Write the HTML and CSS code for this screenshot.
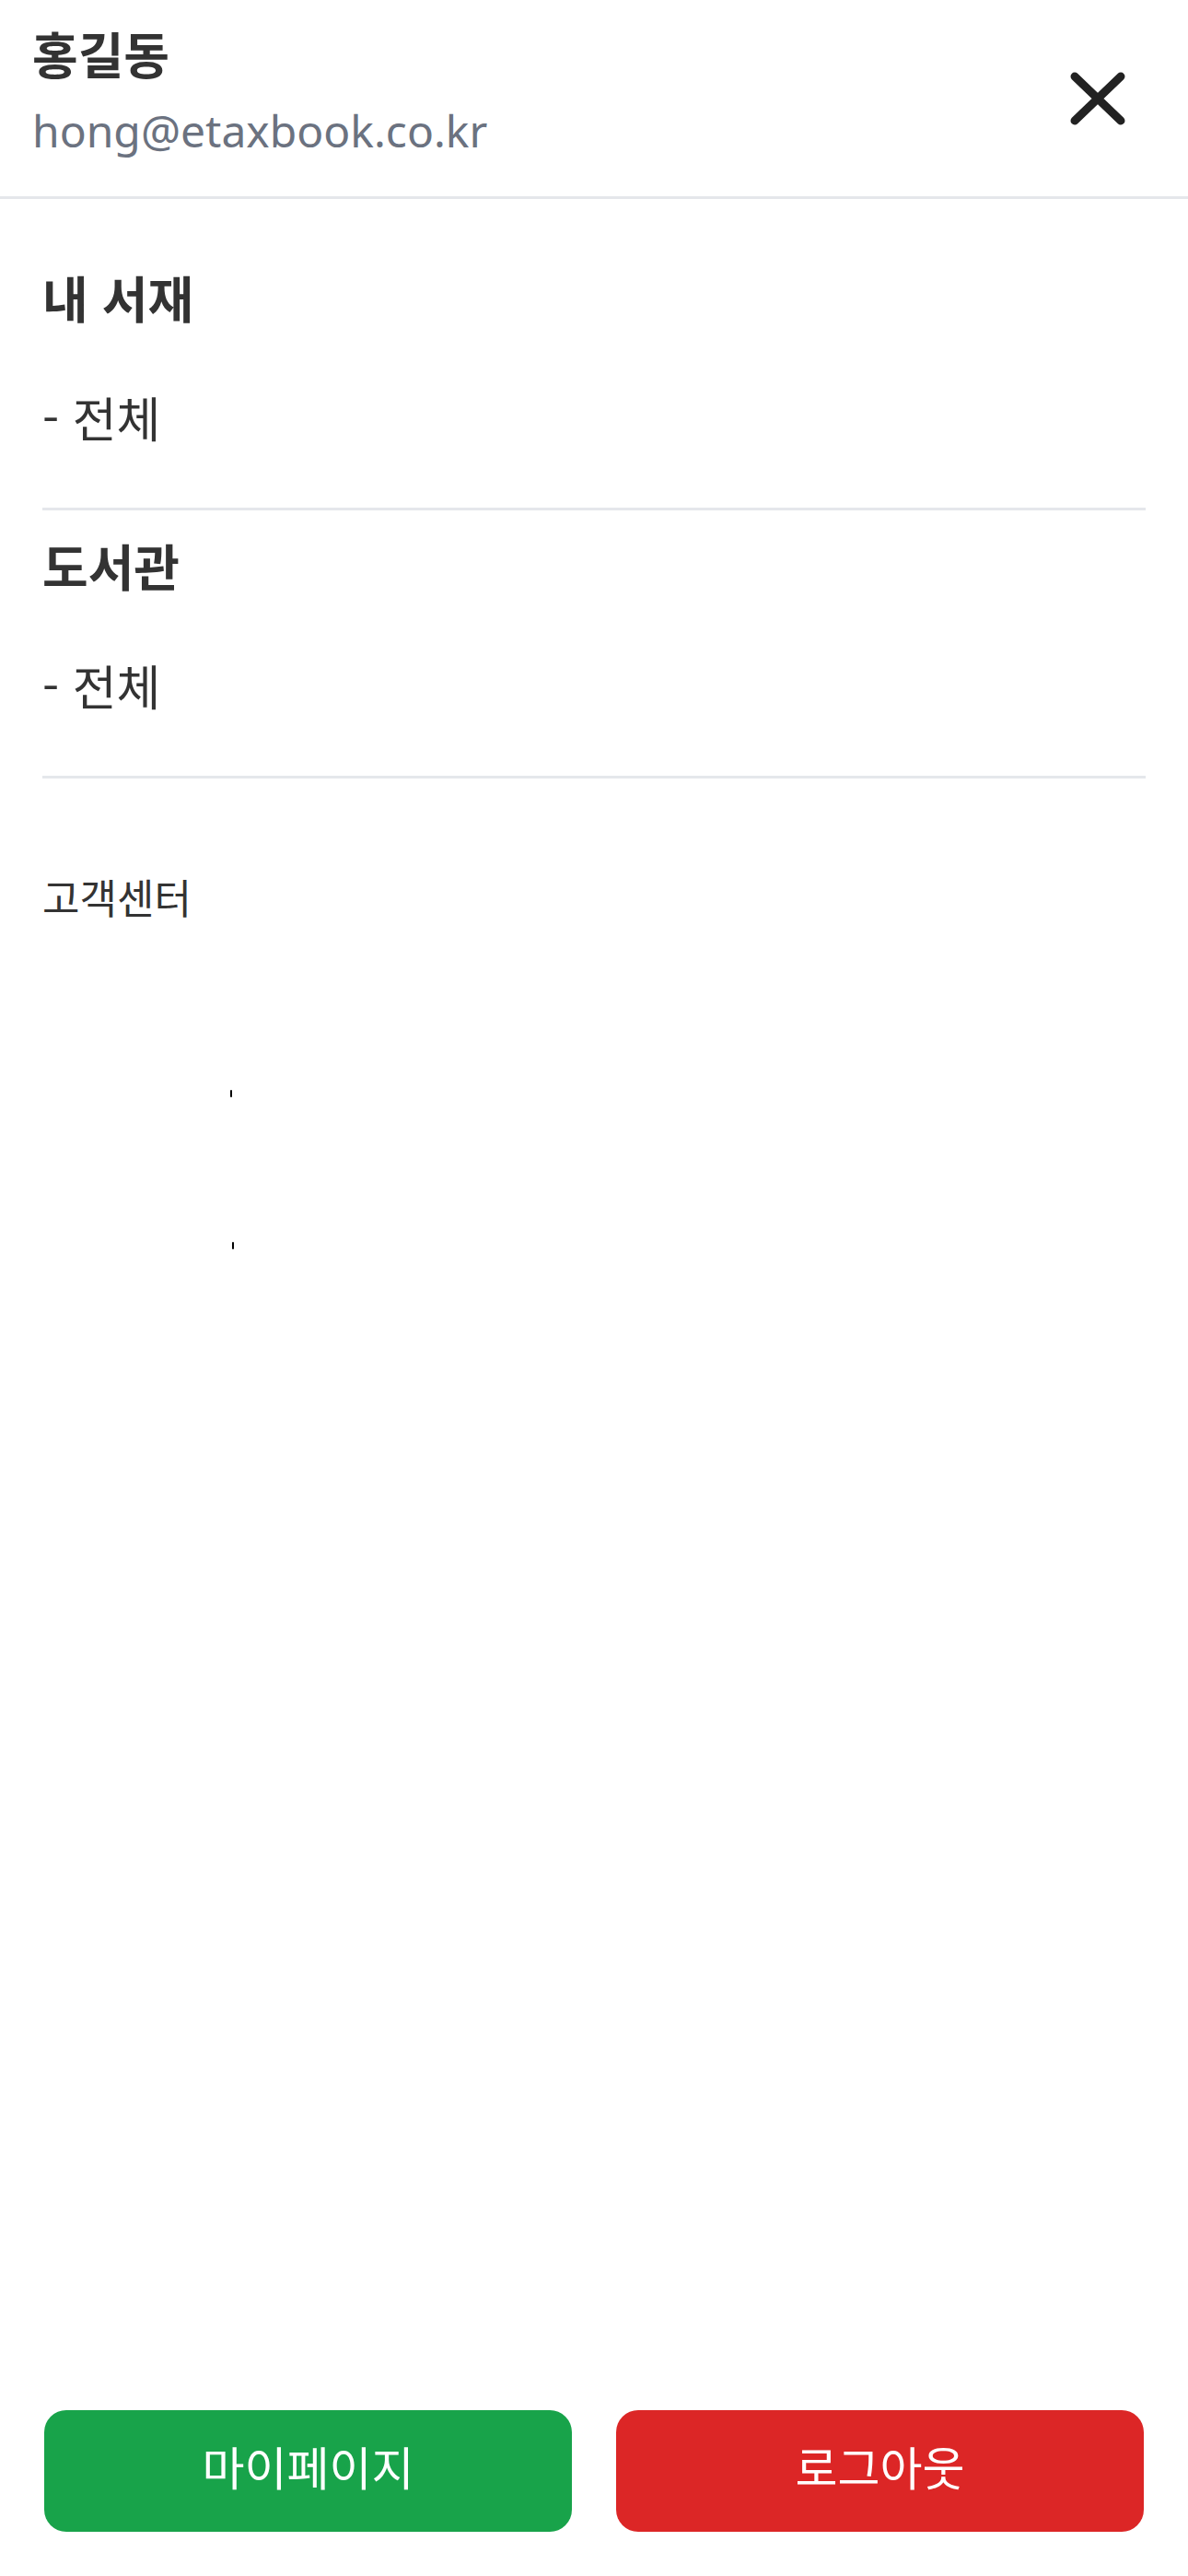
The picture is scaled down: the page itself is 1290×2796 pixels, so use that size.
FILE: index.html
```html
<!DOCTYPE html>
<html lang="ko">
<head>
<meta charset="utf-8">
<title>메뉴</title>
<link rel="stylesheet" href="styles.css">
</head>
<body>
<div class="drawer">
  <header class="head">
    <div class="user">
      <div class="name">홍길동</div>
      <div class="email">hong@etaxbook.co.kr</div>
    </div>
    <button class="close" type="button" aria-label="닫기">
      <svg viewBox="0 0 96 96" width="96" height="96">
        <path d="M23 24 L73 72 M73 24 L23 72" stroke="#222" stroke-width="9" stroke-linecap="round" fill="none"/>
      </svg>
    </button>
  </header>
  <nav class="menu">
    <section class="group first">
      <h2 class="group-title">내 서재</h2>
      <a class="group-link">- 전체</a>
    </section>
    <section class="group">
      <h2 class="group-title">도서관</h2>
      <a class="group-link">- 전체</a>
    </section>
    <a class="support">고객센터</a>
    <div class="marks">
      <i class="mark mark-a"></i>
      <i class="mark mark-b"></i>
    </div>
  </nav>
  <footer class="actions">
    <button class="btn btn-green" type="button">마이페이지</button>
    <button class="btn btn-red" type="button">로그아웃</button>
  </footer>
</div>
</body>
</html>
```

FILE: styles.css
```css
* { box-sizing: border-box; }
html, body { margin: 0; padding: 0; background: #fff; }
body {
  font-family: "Noto Sans CJK KR", "Noto Sans", sans-serif;
  color: #333;
}
.drawer {
  min-height: 100vh;
  display: flex;
  flex-direction: column;
}
.head {
  display: flex;
  align-items: center;
  justify-content: space-between;
  height: 216px;
  padding: 0 50px 0 35px;
  border-bottom: 3px solid #e5e7eb;
}
.user {
  display: flex;
  flex-direction: column;
  padding-bottom: 16px;
}
.name {
  font-size: 54px;
  font-weight: 700;
  line-height: 64px;
  color: #333;
}
.email {
  font-family: "Noto Sans", sans-serif;
  font-size: 48px;
  line-height: 60px;
  color: #6b7280;
  margin-top: 22px;
}
.close {
  width: 96px;
  height: 96px;
  padding: 0;
  border: 0;
  background: none;
  display: flex;
  align-items: center;
  justify-content: center;
}
.close svg { display: block; }
.menu {
  display: flex;
  flex-direction: column;
  padding: 47px 46px 0;
}
.group {
  display: flex;
  flex-direction: column;
  padding: 28px 0 67px;
  border-bottom: 3px solid #e5e7eb;
}
.group-title {
  margin: 0;
  font-size: 54px;
  font-weight: 700;
  line-height: 64px;
  color: #333;
}
.group-link {
  margin-top: 67px;
  font-size: 52px;
  line-height: 62px;
  color: #333;
}
.support {
  margin-top: 100px;
  font-size: 44px;
  line-height: 56px;
  color: #333;
}
.marks {
  display: flex;
  flex-direction: column;
  padding-left: 204px;
}
.mark {
  display: block;
  width: 2px;
  height: 8px;
  background: #000;
  border-radius: 1px;
}
.mark-a { margin-top: 182px; }
.mark-b { margin-top: 157px; margin-left: 2px; }
.actions {
  margin-top: auto;
  display: flex;
  gap: 48px;
  padding: 0 48px 48px;
}
.btn {
  flex: 1;
  height: 132px;
  padding: 0 0 12px;
  border: 0;
  border-radius: 24px;
  font-family: "Noto Sans CJK KR", sans-serif;
  font-size: 50px;
  color: #fff;
}
.btn-green { background: #18a34a; }
.btn-red { background: #dc2626; }
```
